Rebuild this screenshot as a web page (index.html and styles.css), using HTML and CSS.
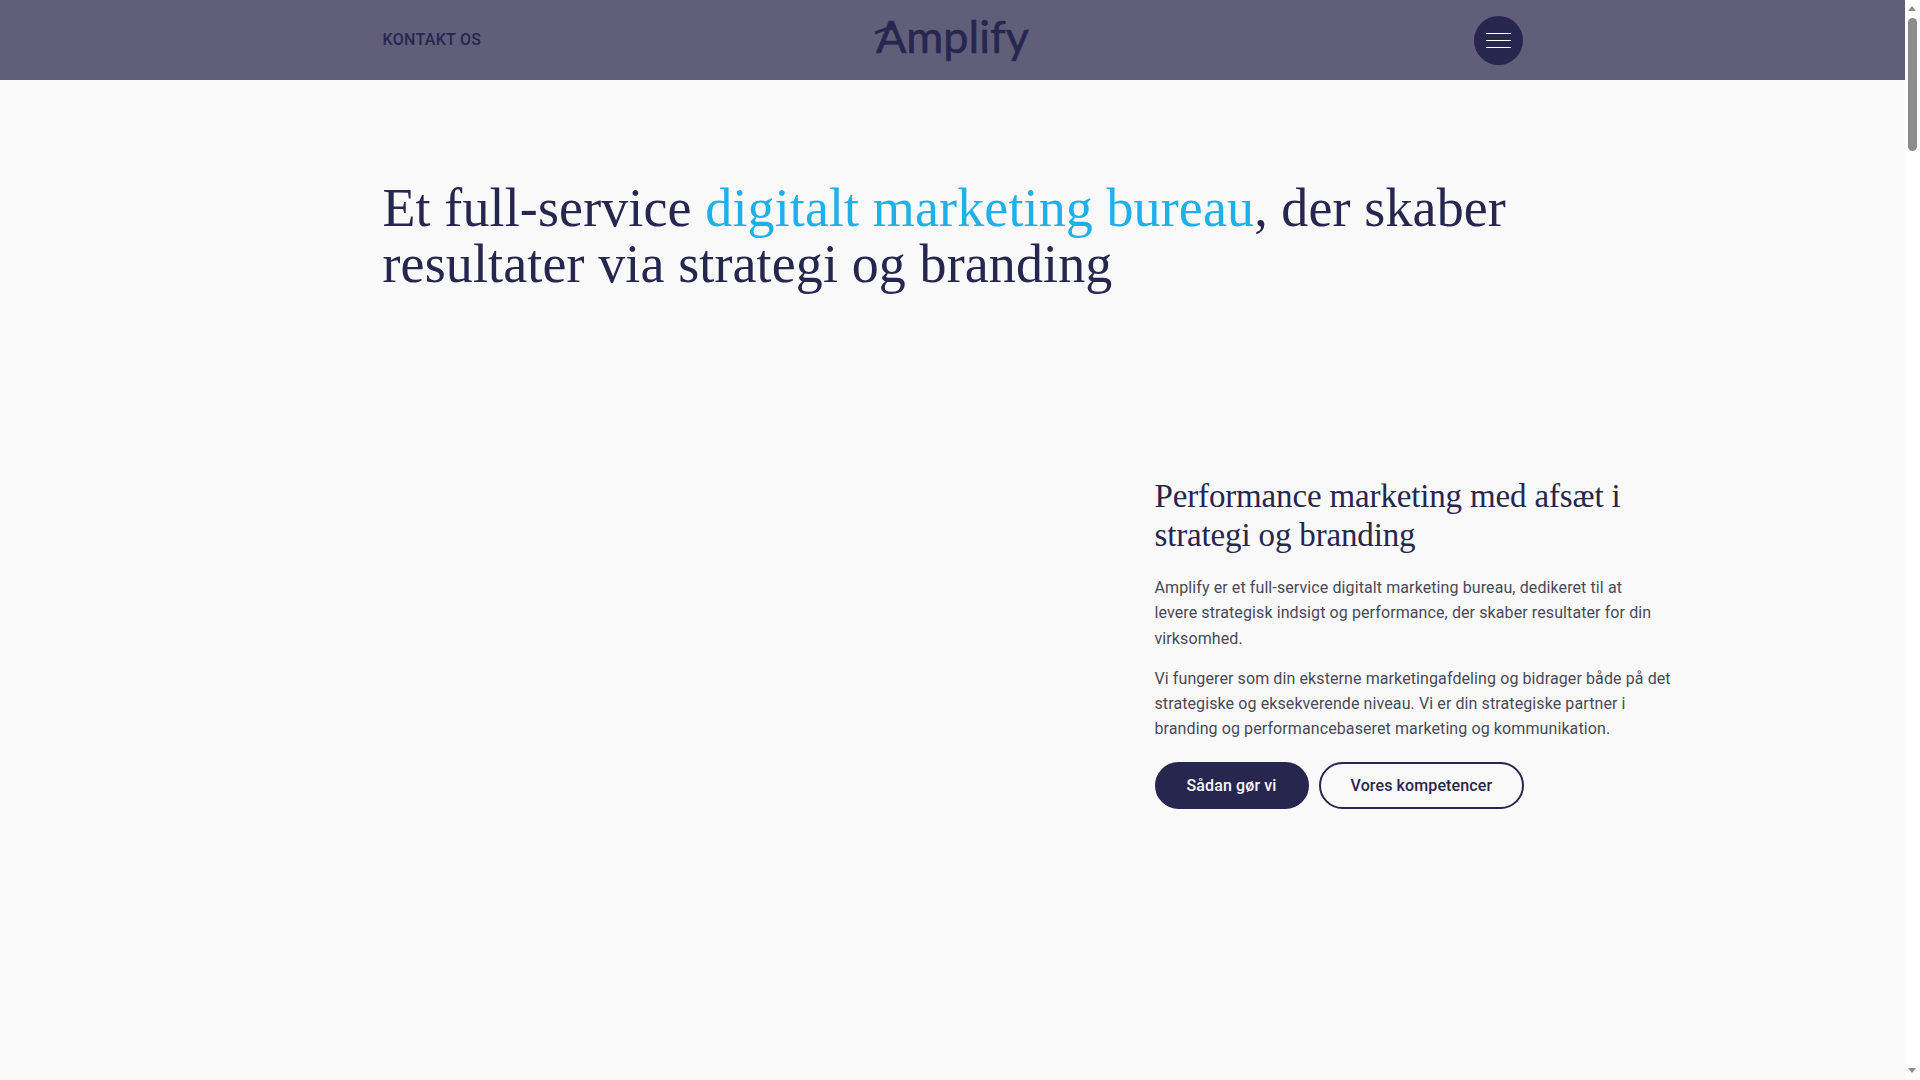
FILE: index.html
```html
<!DOCTYPE html>
<html lang="da">
    <head>
        <meta charset="utf-8">
        <title>Amplify</title>
        <link rel="stylesheet" href="styles.css">
    </head>
    <body>
        <header class="topbar">
            <div class="topbarInner">
                <a class="contactLink" href="#">KONTAKT OS</a>
                <a class="logo" href="#">
                    Amplify
                    <svg class="logoSwoosh" width="30" height="20" viewBox="0 0 30 20" aria-hidden="true">
                        <path d="M1 11 C7 9 12 5 22 7" fill="none" stroke="#27264f" stroke-width="3"/>
                    </svg>
                </a>
                <button class="menuButton" aria-label="Menu">
                    <span></span>
                    <span></span>
                    <span></span>
                </button>
            </div>
        </header>
        <main class="content">
            <h1 class="headline">Et full-service <span class="accent">digitalt marketing bureau</span>, der skaber resultater via strategi og branding</h1>
            <section class="intro">
                <div class="introText">
                    <h2>Performance marketing med afsæt i strategi og branding</h2>
                    <p>Amplify er et full-service digitalt marketing bureau, dedikeret til at<br>levere strategisk indsigt og performance, der skaber resultater for din virksomhed.</p>
                    <p>Vi fungerer som din eksterne marketingafdeling og bidrager både på det strategiske og eksekverende niveau. Vi er din strategiske partner i branding og performancebaseret marketing og kommunikation.</p>
                    <div class="buttons">
                        <a class="button buttonFilled" href="#">Sådan gør vi</a>
                        <a class="button buttonOutline" href="#">Vores kompetencer</a>
                    </div>
                </div>
            </section>
        </main>
        <div class="scrollbar" aria-hidden="true">
            <div class="arrowUp"></div>
            <div class="thumb"></div>
            <div class="arrowDown"></div>
        </div>
    </body>
</html>
```

FILE: styles.css
```css
html {
    height: 100%;
    overflow: hidden;
}

body {
    margin: 0;
    height: 100%;
    padding-right: 15px;
    box-sizing: border-box;
    background-color: #f9f9f9;
    color: #27264f;
    font-family: Roboto, "Liberation Sans", sans-serif;
}

a {
    color: inherit;
    text-decoration: none;
}

.topbar {
    background-color: #615e7a;
    height: 80px;
}

.topbarInner {
    width: 1140px;
    height: 100%;
    margin: 0 auto;
    display: grid;
    grid-template-columns: 1fr auto 1fr;
    align-items: center;
}

.contactLink {
    margin-top: -2px;
    font-size: 16px;
    font-weight: 500;
    letter-spacing: 0.3px;
}

.logo {
    position: relative;
    margin-top: -8px;
    font-family: Lato, sans-serif;
    font-size: 45px;
    line-height: 46px;
    -webkit-text-stroke: 0.6px #27264f;
}

.logoSwoosh {
    position: absolute;
    left: -2px;
    top: 9px;
}

.menuButton {
    justify-self: end;
    width: 49px;
    height: 49px;
    margin-top: 1px;
    padding: 0;
    border: 0;
    border-radius: 50%;
    background-color: #27264f;
    display: flex;
    flex-direction: column;
    align-items: center;
    justify-content: center;
    gap: 6px;
}

.menuButton span {
    width: 25px;
    height: 1px;
    background-color: #fff;
}

.content {
    width: 1140px;
    margin: 0 auto;
}

.headline {
    margin: 100px 0 0;
    font-family: "Liberation Serif", serif;
    font-size: 54px;
    line-height: 56px;
    font-weight: 400;
    letter-spacing: 0.12px;
}

.accent {
    color: #1fb0e9;
}

.intro {
    display: flex;
    margin-top: 185px;
}

.introText {
    width: 518px;
    margin-left: 772px;
    flex: none;
}

.introText h2 {
    margin: 0 0 20px;
    font-family: "Liberation Serif", serif;
    font-size: 33px;
    line-height: 39px;
    font-weight: 400;
    letter-spacing: -0.15px;
}

.introText p {
    margin: 0 0 15px;
    font-size: 16px;
    line-height: 25.3px;
    letter-spacing: 0.1px;
    color: #4a4959;
}

.buttons {
    display: flex;
    gap: 10px;
    margin-top: 20px;
}

.button {
    box-sizing: border-box;
    height: 47px;
    padding: 0 30px;
    border: 2px solid #27264f;
    border-radius: 24px;
    display: flex;
    align-items: center;
    font-size: 16px;
    font-weight: 500;
    letter-spacing: 0.12px;
}

.buttonFilled {
    background-color: #27264f;
    color: #f9f9f9;
}

/* page scrollbar, the headless browser doesn't paint one */
.scrollbar {
    position: fixed;
    top: 0;
    right: 0;
    bottom: 0;
    width: 15px;
    background-color: #fff;
}

.thumb {
    position: absolute;
    top: 18px;
    left: 3px;
    width: 9px;
    height: 133px;
    border-radius: 5px;
    background-color: #8c8c8c;
}

.arrowUp,
.arrowDown {
    position: absolute;
    left: 3px;
    width: 0;
    height: 0;
    border-left: 4.5px solid transparent;
    border-right: 4.5px solid transparent;
}

.arrowUp {
    top: 6px;
    border-bottom: 5px solid #8c8c8c;
}

.arrowDown {
    bottom: 7px;
    border-top: 5px solid #8c8c8c;
}
```
